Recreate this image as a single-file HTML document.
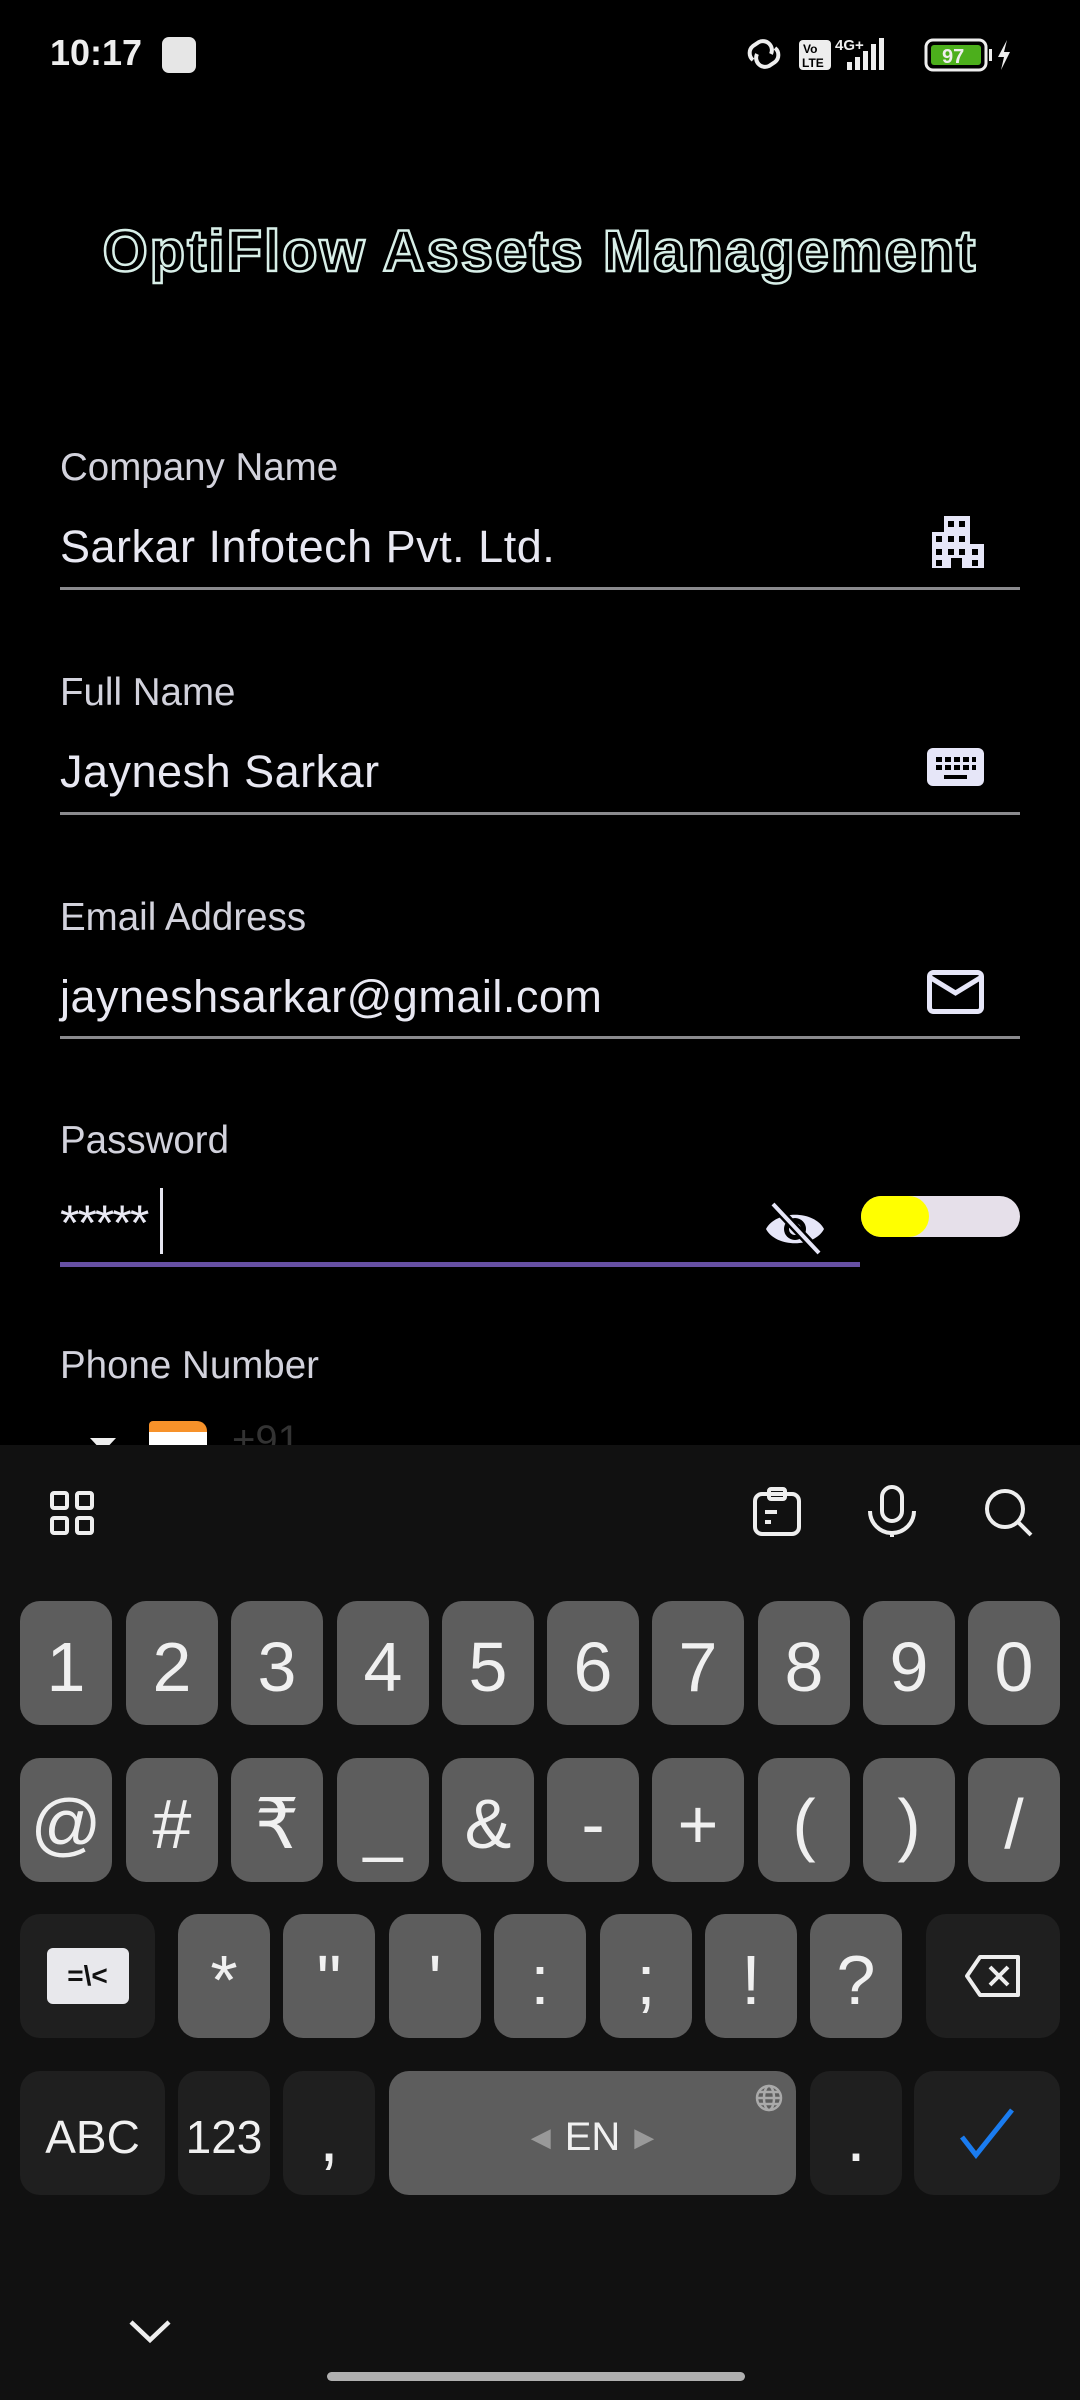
<!DOCTYPE html>
<html><head><meta charset="utf-8"><style>
*{margin:0;padding:0;box-sizing:border-box}
body{width:1080px;height:2400px;background:#000;position:relative;overflow:hidden;font-family:"Liberation Sans",sans-serif;color:#e6e6f0}
.a{position:absolute}
.lbl{position:absolute;left:60px;font-size:38.5px;color:#d2d2dc;font-weight:300}
.val{position:absolute;left:60px;font-size:45px;color:#e8e8f2;letter-spacing:0.5px}
.line{position:absolute;left:60px;width:960px;height:3px;background:#8a8a8e}
.kb{position:absolute;left:0;top:1445px;width:1080px;height:955px;background:#111}
.k{position:absolute;height:124px;background:#5d5d5d;border-radius:20px;color:#f0f0f0;font-size:70px;display:flex;align-items:center;justify-content:center;padding-top:8px}
.d{background:#1f1f1f}
</style></head><body>
<!-- status bar -->
<div class="a" style="left:50px;top:32px;font-size:36px;font-weight:bold;color:#eee">10:17</div>
<div class="a" style="left:162px;top:37px;width:34px;height:36px;background:#e6e6e6;border-radius:7px"></div>
<svg class="a" style="left:745px;top:34px" width="270" height="40" viewBox="0 0 270 40">
<path d="M8 26 a9 9 0 0 1 0-14 l6-4 a9 9 0 0 1 12 12 M30 14 a9 9 0 0 1 0 14 l-6 4 a9 9 0 0 1-12-12" fill="none" stroke="#eee" stroke-width="4"/>
<rect x="54" y="6" width="32" height="30" rx="4" fill="#eee"/>
<text x="58" y="19" font-size="12" font-weight="bold" fill="#000" font-family="Liberation Sans">Vo</text>
<text x="57" y="33" font-size="12" font-weight="bold" fill="#000" font-family="Liberation Sans">LTE</text>
<text x="90" y="16" font-size="15" font-weight="bold" fill="#eee" font-family="Liberation Sans">4G+</text>
<rect x="102" y="28" width="5" height="8" fill="#eee"/><rect x="110" y="23" width="5" height="13" fill="#eee"/><rect x="118" y="17" width="5" height="19" fill="#eee"/><rect x="126" y="10" width="5" height="26" fill="#eee"/><rect x="134" y="4" width="5" height="32" fill="#eee"/>
<rect x="181" y="6" width="60" height="30" rx="7" fill="none" stroke="#eee" stroke-width="3"/>
<rect x="186" y="11" width="50" height="20" rx="3" fill="#4caf1c"/>
<text x="197" y="29" font-size="20" font-weight="bold" fill="#eee" font-family="Liberation Sans">97</text>
<rect x="244" y="15" width="3" height="12" fill="#eee"/>
<path d="M262 6 l-9 17 h6 l-3 13 l9-18 h-6z" fill="#eee"/>
</svg>
<!-- title -->
<div class="a" style="left:0;top:218px;width:1080px;text-align:center;white-space:nowrap;font-size:58px;font-weight:bold;color:#000;-webkit-text-stroke:2.5px #d8efe8;letter-spacing:2px">OptiFlow Assets Management</div>
<!-- fields -->
<div class="lbl" style="top:446px">Company Name</div>
<div class="val" style="top:521px">Sarkar Infotech Pvt. Ltd.</div>
<svg class="a" style="left:932px;top:516px" width="52" height="52" viewBox="0 0 52 52"><path d="M0 16h12v-16h26v28h14v24h-52z" fill="#e6e6f8"/>
<g fill="#000"><rect x="4" y="20" width="6" height="6"/><rect x="16" y="5" width="6" height="6"/><rect x="27" y="5" width="6" height="6"/><rect x="16" y="20" width="6" height="6"/><rect x="27" y="20" width="6" height="6"/><rect x="4" y="33" width="6" height="6"/><rect x="16" y="33" width="6" height="6"/><rect x="27" y="33" width="6" height="6"/><rect x="40" y="33" width="6" height="6"/><rect x="4" y="44" width="6" height="6"/><rect x="40" y="44" width="6" height="6"/><rect x="19" y="42" width="11" height="10"/></g></svg>
<div class="line" style="top:587px"></div>

<div class="lbl" style="top:671px">Full Name</div>
<div class="val" style="top:746px">Jaynesh Sarkar</div>
<svg class="a" style="left:927px;top:748px" width="57" height="38" viewBox="0 0 57 38"><rect width="57" height="38" rx="6" fill="#e6e6f8"/><g fill="#000"><rect x="9" y="9" width="6" height="5"/><rect x="18" y="9" width="6" height="5"/><rect x="27" y="9" width="6" height="5"/><rect x="36" y="9" width="6" height="5"/><rect x="45" y="9" width="4" height="5"/><rect x="9" y="17" width="6" height="5"/><rect x="18" y="17" width="6" height="5"/><rect x="27" y="17" width="6" height="5"/><rect x="36" y="17" width="6" height="5"/><rect x="45" y="17" width="4" height="5"/><rect x="17" y="27" width="23" height="4"/></g></svg>
<div class="line" style="top:812px"></div>

<div class="lbl" style="top:896px">Email Address</div>
<div class="val" style="top:971px">jayneshsarkar@gmail.com</div>
<svg class="a" style="left:927px;top:970px" width="57" height="44" viewBox="0 0 57 44"><rect x="2.5" y="2.5" width="52" height="39" rx="4" fill="none" stroke="#e6e6f8" stroke-width="5"/><path d="M4 8l24.5 15 24.5-15" fill="none" stroke="#e6e6f8" stroke-width="5"/></svg>
<div class="line" style="top:1036px"></div>

<div class="lbl" style="top:1119px">Password</div>
<div class="val" style="top:1194px;font-size:50px;letter-spacing:-2px">*****</div>
<div class="a" style="left:160px;top:1188px;width:3px;height:66px;background:#e6e6f0"></div>
<svg class="a" style="left:764px;top:1202px" width="62" height="54" viewBox="0 0 62 54"><path d="M2 27 C12 8 50 8 60 27 C50 46 12 46 2 27z" fill="#e6e6f8"/><circle cx="31" cy="27" r="11" fill="#000"/><circle cx="31" cy="27" r="6" fill="#e6e6f8"/><path d="M10 3 L56 52" stroke="#000" stroke-width="9"/><path d="M9 2 L55 51" stroke="#e6e6f8" stroke-width="4"/></svg>
<div class="a" style="left:60px;top:1262px;width:800px;height:5px;background:#6750a4"></div>
<div class="a" style="left:861px;top:1196px;width:159px;height:41px;border-radius:21px;background:#e6e0ea"></div>
<div class="a" style="left:861px;top:1196px;width:68px;height:41px;border-radius:21px;background:#ffff00"></div>

<div class="lbl" style="top:1344px">Phone Number</div>
<div class="a" style="left:90px;top:1438px;width:0;height:0;border-left:13px solid transparent;border-right:13px solid transparent;border-top:14px solid #eee"></div>
<div class="a" style="left:149px;top:1421px;width:58px;height:24px;background:linear-gradient(#f7922a 0 45%,#fff 45%);border-radius:4px 10px 0 0"></div>
<div class="a" style="left:232px;top:1418px;font-size:40px;color:#333">+91</div>

<!-- keyboard -->
<div class="kb"></div>
<svg class="a" style="left:50px;top:1491px" width="44" height="44" viewBox="0 0 44 44"><g fill="none" stroke="#eee" stroke-width="4"><rect x="2" y="2" width="15" height="15" rx="2"/><rect x="27" y="2" width="15" height="15" rx="2"/><rect x="2" y="27" width="15" height="15" rx="2"/><rect x="27" y="27" width="15" height="15" rx="2"/></g></svg>
<svg class="a" style="left:752px;top:1487px" width="50" height="50" viewBox="0 0 50 50"><g fill="none" stroke="#eee" stroke-width="4"><rect x="3" y="7" width="44" height="40" rx="7"/><rect x="17" y="2" width="16" height="10" rx="2"/><path d="M13 25h12M13 35h6"/></g></svg>
<svg class="a" style="left:866px;top:1485px" width="52" height="54" viewBox="0 0 52 54"><g fill="none" stroke="#eee" stroke-width="4"><rect x="16" y="2" width="20" height="34" rx="10"/><path d="M4 26 a22 22 0 0 0 44 0M26 48v4"/></g></svg>
<svg class="a" style="left:984px;top:1488px" width="50" height="50" viewBox="0 0 50 50"><g fill="none" stroke="#eee" stroke-width="4"><circle cx="21" cy="21" r="18"/><path d="M34 34l13 13"/></g></svg>

<!-- row1 -->
<div class="k" style="left:20px;top:1601px;width:92px">1</div>
<div class="k" style="left:126px;top:1601px;width:92px">2</div>
<div class="k" style="left:231px;top:1601px;width:92px">3</div>
<div class="k" style="left:337px;top:1601px;width:92px">4</div>
<div class="k" style="left:442px;top:1601px;width:92px">5</div>
<div class="k" style="left:547px;top:1601px;width:92px">6</div>
<div class="k" style="left:652px;top:1601px;width:92px">7</div>
<div class="k" style="left:758px;top:1601px;width:92px">8</div>
<div class="k" style="left:863px;top:1601px;width:92px">9</div>
<div class="k" style="left:968px;top:1601px;width:92px">0</div>
<!-- row2 -->
<div class="k" style="left:20px;top:1758px;width:92px">@</div>
<div class="k" style="left:126px;top:1758px;width:92px">#</div>
<div class="k" style="left:231px;top:1758px;width:92px">₹</div>
<div class="k" style="left:337px;top:1758px;width:92px">_</div>
<div class="k" style="left:442px;top:1758px;width:92px">&amp;</div>
<div class="k" style="left:547px;top:1758px;width:92px">-</div>
<div class="k" style="left:652px;top:1758px;width:92px">+</div>
<div class="k" style="left:758px;top:1758px;width:92px">(</div>
<div class="k" style="left:863px;top:1758px;width:92px">)</div>
<div class="k" style="left:968px;top:1758px;width:92px">/</div>
<!-- row3 -->
<div class="k d" style="left:20px;top:1914px;width:135px;padding-top:0"><div style="background:#e8e8ec;color:#111;font-size:28px;font-weight:bold;width:82px;height:56px;border-radius:6px;display:flex;align-items:center;justify-content:center">=\&lt;</div></div>
<div class="k" style="left:178px;top:1914px;width:92px">*</div>
<div class="k" style="left:283px;top:1914px;width:92px">"</div>
<div class="k" style="left:389px;top:1914px;width:92px">'</div>
<div class="k" style="left:494px;top:1914px;width:92px">:</div>
<div class="k" style="left:600px;top:1914px;width:92px">;</div>
<div class="k" style="left:705px;top:1914px;width:92px">!</div>
<div class="k" style="left:810px;top:1914px;width:92px">?</div>
<div class="k d" style="left:926px;top:1914px;width:134px;padding-top:0"><svg width="58" height="44" viewBox="0 0 58 44"><path d="M16 3h38v38h-38l-13-19z" fill="none" stroke="#eee" stroke-width="4" stroke-linejoin="round"/><path d="M26 13l18 18M44 13l-18 18" stroke="#eee" stroke-width="4"/></svg></div>
<!-- row4 -->
<div class="k d" style="left:20px;top:2071px;width:145px;font-size:46px">ABC</div>
<div class="k d" style="left:178px;top:2071px;width:92px;font-size:46px">123</div>
<div class="k d" style="left:283px;top:2071px;width:92px">,</div>
<div class="k" style="left:389px;top:2071px;width:407px;font-size:40px"><span style="color:#999;font-size:26px;margin-right:14px">◀</span>EN<span style="color:#999;font-size:26px;margin-left:14px">▶</span>
<svg style="position:absolute;right:12px;top:12px" width="30" height="30" viewBox="0 0 30 30"><g fill="none" stroke="#aaa" stroke-width="2.5"><circle cx="15" cy="15" r="12"/><ellipse cx="15" cy="15" rx="5" ry="12"/><path d="M3 15h24M5 9h20M5 21h20"/></g></svg></div>
<div class="k d" style="left:810px;top:2071px;width:92px">.</div>
<div class="k d" style="left:914px;top:2071px;width:146px;padding-top:0"><svg width="56" height="52" viewBox="0 0 56 52"><path d="M3 30l14 18 36-45" fill="none" stroke="#1a7cf0" stroke-width="5"/></svg></div>
<!-- nav -->
<svg class="a" style="left:128px;top:2318px" width="44" height="26" viewBox="0 0 44 26"><path d="M3 4l19 18 19-18" fill="none" stroke="#eee" stroke-width="4.5"/></svg>
<div class="a" style="left:327px;top:2372px;width:418px;height:9px;border-radius:5px;background:#b0b0b0"></div>
</body></html>
